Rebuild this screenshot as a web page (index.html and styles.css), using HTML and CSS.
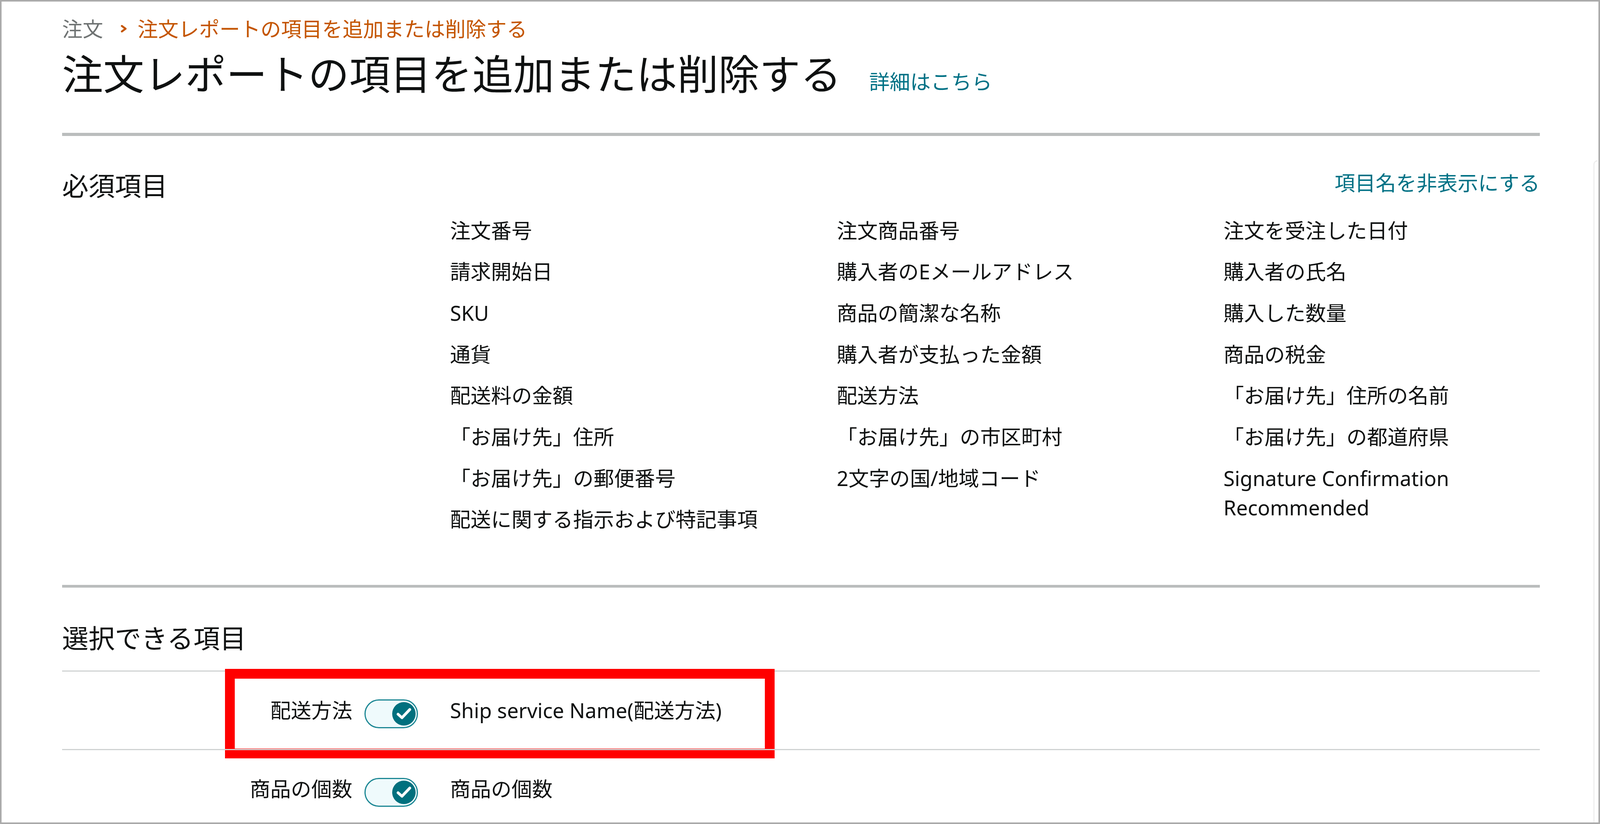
FILE: index.html
```html
<!DOCTYPE html>
<html lang="ja">
<head>
    <meta charset="UTF-8">
    <meta name="viewport" content="width=device-width, initial-scale=1.0">
    <title>注文レポートの項目を追加または削除する</title>
    <link rel="stylesheet" href="styles.css">
</head>
<body>
    <div class="frame">
        <div class="breadcrumb">
            <span class="crumb-parent">注文</span>
            <svg class="crumb-sep" width="16" height="19" viewBox="0 0 16 19">
                <path d="M3 2.5 L12.5 9.5 L3 16.5" fill="none" stroke="#c45500" stroke-width="5" stroke-linecap="round" stroke-linejoin="round"/>
            </svg>
            <span class="crumb-current">注文レポートの項目を追加または削除する</span>
        </div>

        <div class="title-row">
            <h1>注文レポートの項目を追加または削除する</h1>
            <a class="link" href="#">詳細はこちら</a>
        </div>

        <hr class="divider">

        <div class="section required">
            <div class="section-head">
                <h2>必須項目</h2>
                <a class="link" href="#">項目名を非表示にする</a>
            </div>
            <div class="field-grid">
                <ul class="field-list">
                    <li>注文番号</li>
                    <li>請求開始日</li>
                    <li>SKU</li>
                    <li>通貨</li>
                    <li>配送料の金額</li>
                    <li>「お届け先」住所</li>
                    <li>「お届け先」の郵便番号</li>
                    <li>配送に関する指示および特記事項</li>
                </ul>
                <ul class="field-list">
                    <li>注文商品番号</li>
                    <li>購入者のEメールアドレス</li>
                    <li>商品の簡潔な名称</li>
                    <li>購入者が支払った金額</li>
                    <li>配送方法</li>
                    <li>「お届け先」の市区町村</li>
                    <li>2文字の国/地域コード</li>
                </ul>
                <ul class="field-list">
                    <li>注文を受注した日付</li>
                    <li>購入者の氏名</li>
                    <li>購入した数量</li>
                    <li>商品の税金</li>
                    <li>「お届け先」住所の名前</li>
                    <li>「お届け先」の都道府県</li>
                    <li>Signature Confirmation Recommended</li>
                </ul>
            </div>
        </div>

        <hr class="divider">

        <div class="section optional">
            <h2>選択できる項目</h2>
            <div class="opt-list">
                <div class="opt-row">
                    <div class="opt-label">配送方法</div>
                    <div class="toggle">
                        <span class="knob">
                            <svg width="60" height="60" viewBox="0 0 60 60"><path d="M15 31 L25 40 L45 19" fill="none" stroke="#fff" stroke-width="7" stroke-linecap="round" stroke-linejoin="round"/></svg>
                        </span>
                    </div>
                    <div class="opt-name">Ship service Name(配送方法)</div>
                    <div class="highlight"></div>
                </div>
                <div class="opt-row">
                    <div class="opt-label">商品の個数</div>
                    <div class="toggle">
                        <span class="knob">
                            <svg width="60" height="60" viewBox="0 0 60 60"><path d="M15 31 L25 40 L45 19" fill="none" stroke="#fff" stroke-width="7" stroke-linecap="round" stroke-linejoin="round"/></svg>
                        </span>
                    </div>
                    <div class="opt-name">商品の個数</div>
                </div>
            </div>
        </div>

        <div class="scroll-edge"></div>
    </div>
</body>
</html>
```

FILE: styles.css
```css
:root {
    --text-color: #0f1111;
    --link-color: #007185;
    --crumb-color: #c45500;
    --thick-line: #babdbd;
    --thin-line: #d0d3d3;
}

html, body {
    margin: 0;
    padding: 0;
    background-color: white;
}

body {
    font-family: "Noto Sans", "Noto Sans CJK JP", sans-serif;
    color: var(--text-color);
    font-size: 52.5px;
    line-height: 75px;
}

.frame {
    position: relative;
    box-sizing: border-box;
    height: 2109px;
    border: 4px solid #ababab;
    padding: 32px 150px 0 155px;
    overflow: hidden;
}

.breadcrumb {
    display: flex;
    align-items: center;
}

.crumb-parent {
    color: #6f7373;
}

.crumb-sep {
    margin: 0 27px 0 45px;
}

.crumb-current {
    color: var(--crumb-color);
}

.title-row {
    display: flex;
    align-items: baseline;
    margin-top: 18px;
}

h1 {
    margin: 0;
    font-size: 105px;
    line-height: 120px;
    font-weight: normal;
}

.link {
    color: var(--link-color);
    text-decoration: none;
}

.title-row .link {
    margin-left: 71px;
}

.divider {
    border: 0;
    height: 7.5px;
    background-color: var(--thick-line);
    margin: 91px 0 0 0;
}

.required + .divider {
    margin-top: 130.5px;
}

.section {
    padding-top: 82px;
}

.optional {
    padding-top: 84px;
}

h2 {
    margin: 0;
    font-size: 67.5px;
    line-height: 90px;
    font-weight: normal;
}

.section-head {
    display: flex;
    justify-content: space-between;
    align-items: flex-start;
}

.field-grid {
    display: grid;
    grid-template-columns: 990px 990px 1fr;
    margin-top: 32px;
    padding-left: 993px;
}

.field-list {
    list-style: none;
    margin: 0;
    padding: 0;
    display: flex;
    flex-direction: column;
    gap: 30.7px;
}

.opt-list {
    margin-top: 37.5px;
}

.opt-row {
    position: relative;
    display: flex;
    align-items: flex-start;
    padding: 61.5px 0 52.75px;
    border-top: 3.75px solid var(--thin-line);
}

.opt-label {
    width: 743px;
    text-align: right;
}

.toggle {
    box-sizing: border-box;
    display: flex;
    align-items: center;
    justify-content: flex-end;
    width: 137px;
    height: 74px;
    margin: 9.75px 0 0 31px;
    padding: 0 3px;
    border: 3.5px solid #1c8794;
    border-radius: 37px;
    background-color: #effafc;
}

.knob {
    display: block;
    width: 60px;
    height: 60px;
    border-radius: 50%;
    background-color: #00707e;
}

.knob svg {
    display: block;
}

.opt-name {
    margin-left: 82px;
}

/* red annotation box drawn over the first optional row */
.highlight {
    position: absolute;
    left: 417px;
    top: -7px;
    width: 1407px;
    height: 229px;
    box-sizing: border-box;
    border: 25px solid #ff0000;
}

.scroll-edge {
    position: absolute;
    right: 2px;
    top: 406px;
    bottom: 0;
    width: 8px;
    border-left: 3px solid #eeeeee;
    border-top: 3px solid #eeeeee;
    border-top-left-radius: 14px;
}
```
